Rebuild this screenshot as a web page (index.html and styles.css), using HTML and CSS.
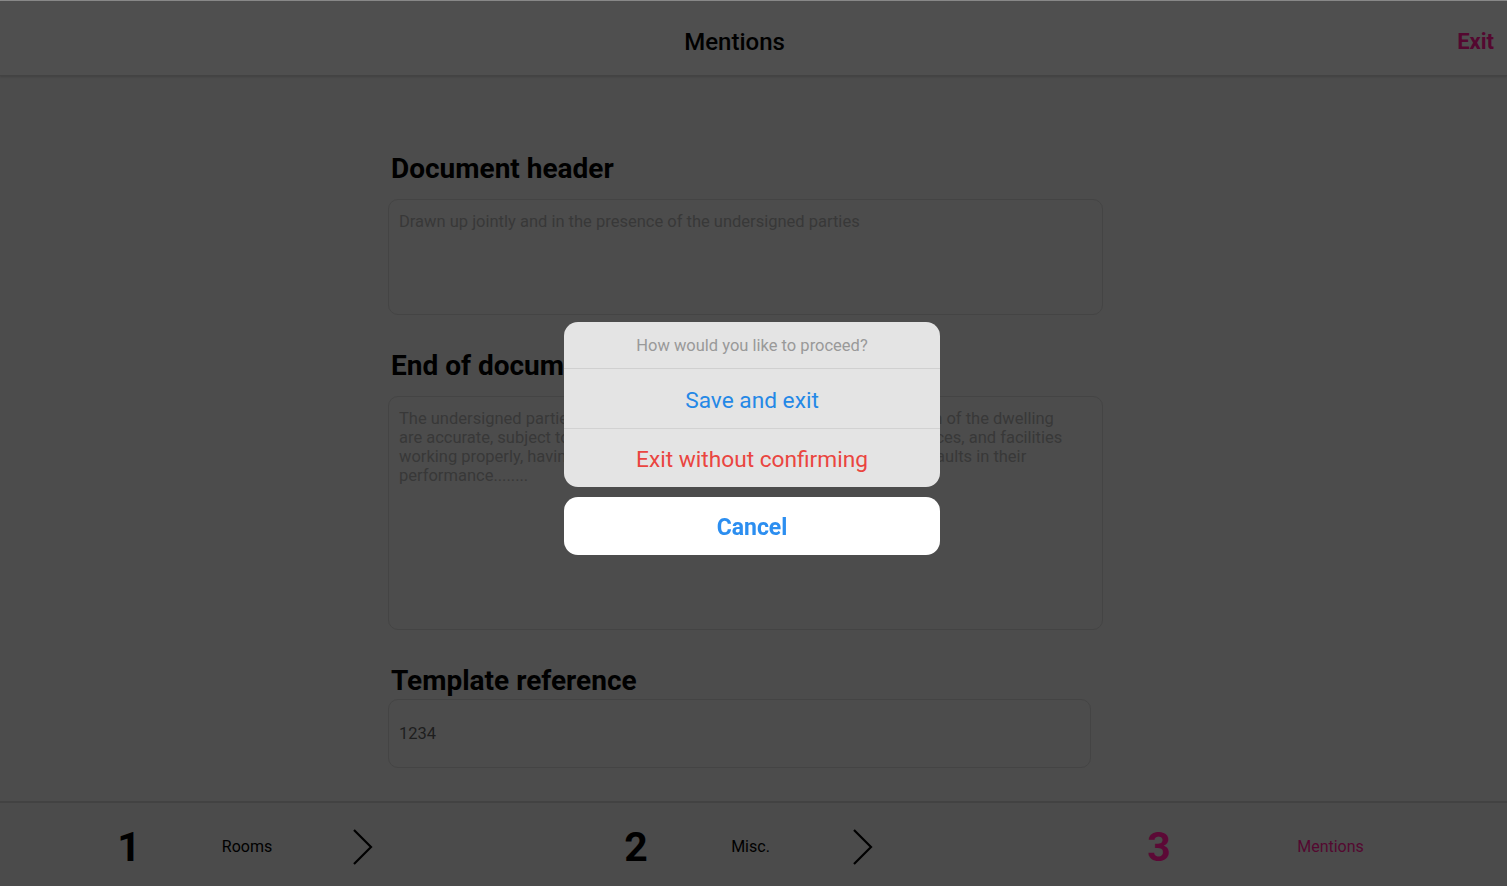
FILE: index.html
```html
<!DOCTYPE html>
<html lang="en">
<head>
  <meta charset="UTF-8">
  <meta name="viewport" content="width=device-width, initial-scale=1.0">
  <title>Mentions</title>
  <link rel="stylesheet" href="styles.css">
</head>
<body>

  <div class="app">
    <header class="topbar">
      <h1 class="topbar-title">Mentions</h1>
      <a href="#" class="topbar-exit">Exit</a>
    </header>

    <main class="main">
      <div class="content">
        <h2 class="section-title">Document header</h2>
        <div class="field field-short">
          <span class="placeholder">Drawn up jointly and in the presence of the undersigned parties</span>
        </div>

        <h2 class="section-title">End of document</h2>
        <div class="field field-tall">
          <span class="placeholder">The undersigned parties hereby affirm that the description of the condition of the dwelling<br>
          are accurate, subject to any hidden defects, and that the equipments, devices, and facilities<br>
          working properly, having shown no faults or breakdown that could cause faults in their<br>
          performance........</span>
        </div>

        <h2 class="section-title">Template reference</h2>
        <div class="field field-input">1234</div>
      </div>
    </main>

    <footer class="steps">
      <div class="step">
        <span class="step-num">1</span>
        <span class="step-label">Rooms</span>
        <svg class="step-arrow" width="22" height="36" viewBox="0 0 22 36">
          <polyline points="2,1 19,18 2,35" fill="none" stroke="#000" stroke-width="2.2"/>
        </svg>
      </div>
      <div class="step step-misc">
        <span class="step-num">2</span>
        <span class="step-label">Misc.</span>
        <svg class="step-arrow" width="22" height="36" viewBox="0 0 22 36">
          <polyline points="2,1 19,18 2,35" fill="none" stroke="#000" stroke-width="2.2"/>
        </svg>
      </div>
      <div class="step step-active">
        <span class="step-num">3</span>
        <span class="step-label">Mentions</span>
      </div>
    </footer>
  </div>

  <div class="sheet-layer">
    <div class="sheet">
      <div class="sheet-group">
        <div class="sheet-title">How would you like to proceed?</div>
        <a href="#" class="sheet-btn sheet-save">Save and exit</a>
        <a href="#" class="sheet-btn sheet-discard">Exit without confirming</a>
      </div>
      <a href="#" class="sheet-cancel">Cancel</a>
    </div>
  </div>

</body>
</html>
```

FILE: styles.css
```css
body {
  font-family: Roboto, "Noto Sans", Arial, sans-serif;
  background: #4c4c4c;
  margin: 0;
  height: 100vh;
  overflow: hidden;
}

a {
  text-decoration: none;
}

.app {
  display: flex;
  flex-direction: column;
  height: 100vh;
  border-top: 1px solid #8a8a8a;
  box-sizing: border-box;
}

/* top bar */
.topbar {
  flex-shrink: 0;
  display: flex;
  align-items: center;
  box-sizing: border-box;
  height: 75px;
  padding-top: 7px;
  background: #4f4f4f;
  border-bottom: 1px solid #434343;
  box-shadow: 0 1px 2px rgba(0,0,0,0.15);
}

.topbar-title {
  flex: 1;
  margin: 0;
  padding-left: 24px;
  text-align: center;
  font-size: 24px;
  font-weight: 500;
  color: #000;
}

.topbar-exit {
  padding: 0 13px 0 12px;
  font-size: 22px;
  font-weight: 700;
  color: #540830;
}

/* form */
.main {
  flex: 1;
  min-height: 0;
  overflow: hidden;
  padding: 76px 16px 0 0;
}

.content {
  width: 715px;
  margin: 0 auto;
}

.section-title {
  margin: 0 0 13px 3px;
  font-size: 28px;
  line-height: 34px;
  font-weight: 700;
  color: #000;
}

.field {
  box-sizing: border-box;
  border: 1.5px solid #444;
  border-radius: 10px;
  padding: 12px 10px;
  font-size: 16.5px;
  line-height: 19px;
  margin-bottom: 34px;
}

.placeholder {
  color: #383838;
  white-space: nowrap;
}

.field-short {
  height: 116px;
}

.field-tall {
  height: 234px;
  margin-top: 1px;
}

.field-input {
  display: flex;
  align-items: center;
  width: 703px;
  height: 69px;
  margin: -12px 0 0;
  color: #1e1e1e;
}

/* bottom steps */
.steps {
  flex-shrink: 0;
  display: grid;
  grid-template-columns: 507px 503px 1fr;
  align-items: center;
  box-sizing: border-box;
  height: 85px;
  padding: 4px 0 0 117px;
  background: #4b4b4b;
  border-top: 2px solid #424242;
}

.step {
  display: flex;
  align-items: center;
}

.step-num {
  width: 24px;
  text-align: center;
  font-size: 41px;
  font-weight: 700;
  color: #000;
}

.step-label {
  width: 212px;
  text-align: center;
  font-size: 16px;
  color: #000;
}

.step-misc .step-label {
  width: 205px;
}

.step-arrow {
  margin-left: -1px;
}

.step-active .step-num {
  margin-left: 20px;
  color: #5c0936;
}

.step-active .step-label {
  width: 319px;
  color: #540830;
}

/* action sheet */
.sheet-layer {
  position: fixed;
  inset: 0;
  display: flex;
  align-items: center;
  justify-content: center;
  padding-bottom: 9px;
}

.sheet {
  width: 376px;
  margin-left: -3px;
}

.sheet-group {
  background: #e4e4e4;
  border-radius: 14px;
  overflow: hidden;
}

.sheet-title {
  height: 46px;
  line-height: 48px;
  text-align: center;
  font-size: 16.5px;
  color: #999;
  border-bottom: 1px solid #d0d0d0;
}

.sheet-btn {
  display: block;
  box-sizing: border-box;
  height: 60px;
  padding-top: 4px;
  line-height: 55px;
  text-align: center;
  font-size: 22.7px;
}

.sheet-save {
  color: #2488e6;
  border-bottom: 1.5px solid #d2d2d2;
}

.sheet-discard {
  height: 58px;
  line-height: 54px;
  color: #ea4540;
}

.sheet-cancel {
  display: block;
  box-sizing: border-box;
  margin-top: 10px;
  height: 58px;
  padding-top: 4px;
  line-height: 54px;
  background: #fff;
  border-radius: 14px;
  text-align: center;
  font-size: 23px;
  font-weight: 700;
  color: #2c8ef0;
}
```
